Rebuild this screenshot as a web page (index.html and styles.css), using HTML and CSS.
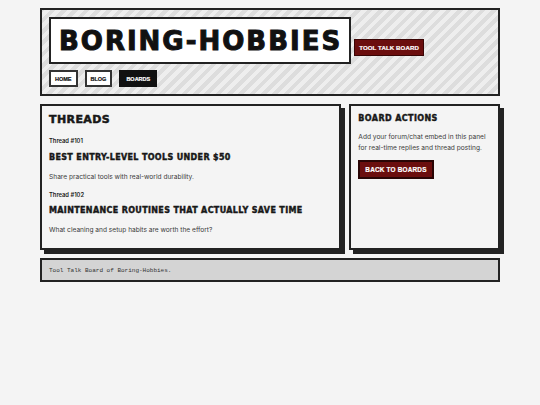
FILE: index.html
```html
<!DOCTYPE html>
<html>
<head>
<meta charset="utf-8">
<link rel="stylesheet" href="styles.css">
</head>
<body>
<div class="wrap">
  <header class="header">
    <div class="brand-row">
      <h1 class="title">BORING-HOBBIES</h1>
      <span class="badge">TOOL TALK BOARD</span>
    </div>
    <nav class="nav">
      <a class="nav-item">HOME</a>
      <a class="nav-item">BLOG</a>
      <a class="nav-item active">BOARDS</a>
    </nav>
  </header>
  <div class="grid">
    <section class="panel">
      <h2 class="panel-title">THREADS</h2>
      <div class="thread-id">Thread #101</div>
      <h3 class="thread-title">BEST ENTRY-LEVEL TOOLS UNDER $50</h3>
      <p class="thread-desc">Share practical tools with real-world durability.</p>
      <div class="thread-id next">Thread #102</div>
      <h3 class="thread-title">MAINTENANCE ROUTINES THAT ACTUALLY SAVE TIME</h3>
      <p class="thread-desc">What cleaning and setup habits are worth the effort?</p>
    </section>
    <aside class="panel side">
      <h2 class="side-title">BOARD ACTIONS</h2>
      <p class="side-text">Add your forum/chat embed in this panel for real-time replies and thread posting.</p>
      <a class="btn">BACK TO BOARDS</a>
    </aside>
  </div>
  <footer class="footer">Tool Talk Board of Boring-Hobbies.</footer>
</div>
</body>
</html>
```
FILE: styles.css
```css
* { box-sizing: border-box; }
html, body { margin: 0; padding: 0; }
body {
  background: #f4f4f4;
  color: #1a1a1a;
  font-family: Inter, "Liberation Sans", sans-serif;
}
.wrap {
  width: 460px;
  margin: 8px auto 0;
  display: flex;
  flex-direction: column;
  gap: 8px;
}
.header {
  border: 2px solid #222;
  padding: 7px;
  background: repeating-linear-gradient(-45deg, #eeeeee 0 4px, #dddddd 4px 8px);
}
.brand-row {
  display: flex;
  align-items: flex-end;
  gap: 3px;
}
.title {
  margin: 0;
  background: #fff;
  border: 2px solid #222;
  height: 47px;
  padding: 0 7px 0 8px;
  display: flex;
  align-items: center;
  font-family: "DejaVu Sans", sans-serif;
  font-weight: 700;
  font-size: 26px;
  letter-spacing: 2px;
  -webkit-text-stroke: 1px #111;
  color: #111;
}
.badge {
  background: #6b0e0e;
  color: #fff;
  border: 1px solid #3a0505;
  font-family: "Liberation Sans", sans-serif;
  font-weight: 700;
  font-size: 6.1px;
  letter-spacing: 0.1px;
  -webkit-text-stroke: 0.2px #fff;
  padding: 4px 4px;
  margin-bottom: 8px;
}
.nav {
  display: flex;
  gap: 7px;
  margin-top: 6px;
}
.nav-item {
  height: 17px;
  border: 2px solid #333;
  background: #fff;
  color: #111;
  display: flex;
  align-items: center;
  padding: 0 4px;
  font-family: "Liberation Sans", sans-serif;
  font-weight: 700;
  font-size: 5.5px;
  -webkit-text-stroke: 0.2px currentColor;
}
.nav-item.active {
  background: #111;
  color: #fff;
  border-color: #111;
  padding: 0 5px;
}
.grid {
  display: grid;
  grid-template-columns: 2fr 1fr;
  gap: 8px;
}
.panel {
  border: 2px solid #222;
  background: #f4f4f4;
  box-shadow: 4px 4px 0 #222;
  padding: 7px 7px 10px;
  height: 146px;
}
.panel-title {
  margin: 0;
  font-family: "DejaVu Sans", sans-serif;
  font-weight: 700;
  font-size: 11px;
  letter-spacing: 0.4px;
  -webkit-text-stroke: 0.5px #111;
}
.thread-id {
  font-size: 5.8px;
  font-weight: 600;
  margin-top: 11px;
}
.thread-id.next { margin-top: 10px; }
.thread-title {
  margin: 8.5px 0 0;
  font-family: "DejaVu Sans", sans-serif;
  font-weight: 700;
  font-size: 8px;
  letter-spacing: 0.35px;
  -webkit-text-stroke: 0.4px #111;
}
.thread-desc {
  margin: 11px 0 0;
  font-size: 6.6px;
  color: #3a3a3a;
}
.side-title {
  margin: 1px 0 0;
  font-family: "DejaVu Sans", sans-serif;
  font-weight: 700;
  font-size: 8px;
  letter-spacing: 0.4px;
  -webkit-text-stroke: 0.4px #111;
}
.side-text {
  margin: 9px 0 0;
  font-size: 6.6px;
  line-height: 11px;
  color: #3a3a3a;
}
.btn {
  display: inline-flex;
  align-items: center;
  height: 19px;
  margin-top: 6px;
  padding: 0 5px;
  background: #6b0e0e;
  color: #fff;
  border: 2px solid #2a0505;
  font-family: "Liberation Sans", sans-serif;
  font-weight: 700;
  font-size: 6.4px;
  letter-spacing: 0.2px;
  -webkit-text-stroke: 0.2px #fff;
}
.footer {
  border: 2px solid #222;
  background: #d4d4d4;
  height: 24px;
  padding: 0 7px;
  display: flex;
  align-items: center;
  font-family: "Liberation Mono", monospace;
  font-size: 6px;
  color: #333;
}
```
